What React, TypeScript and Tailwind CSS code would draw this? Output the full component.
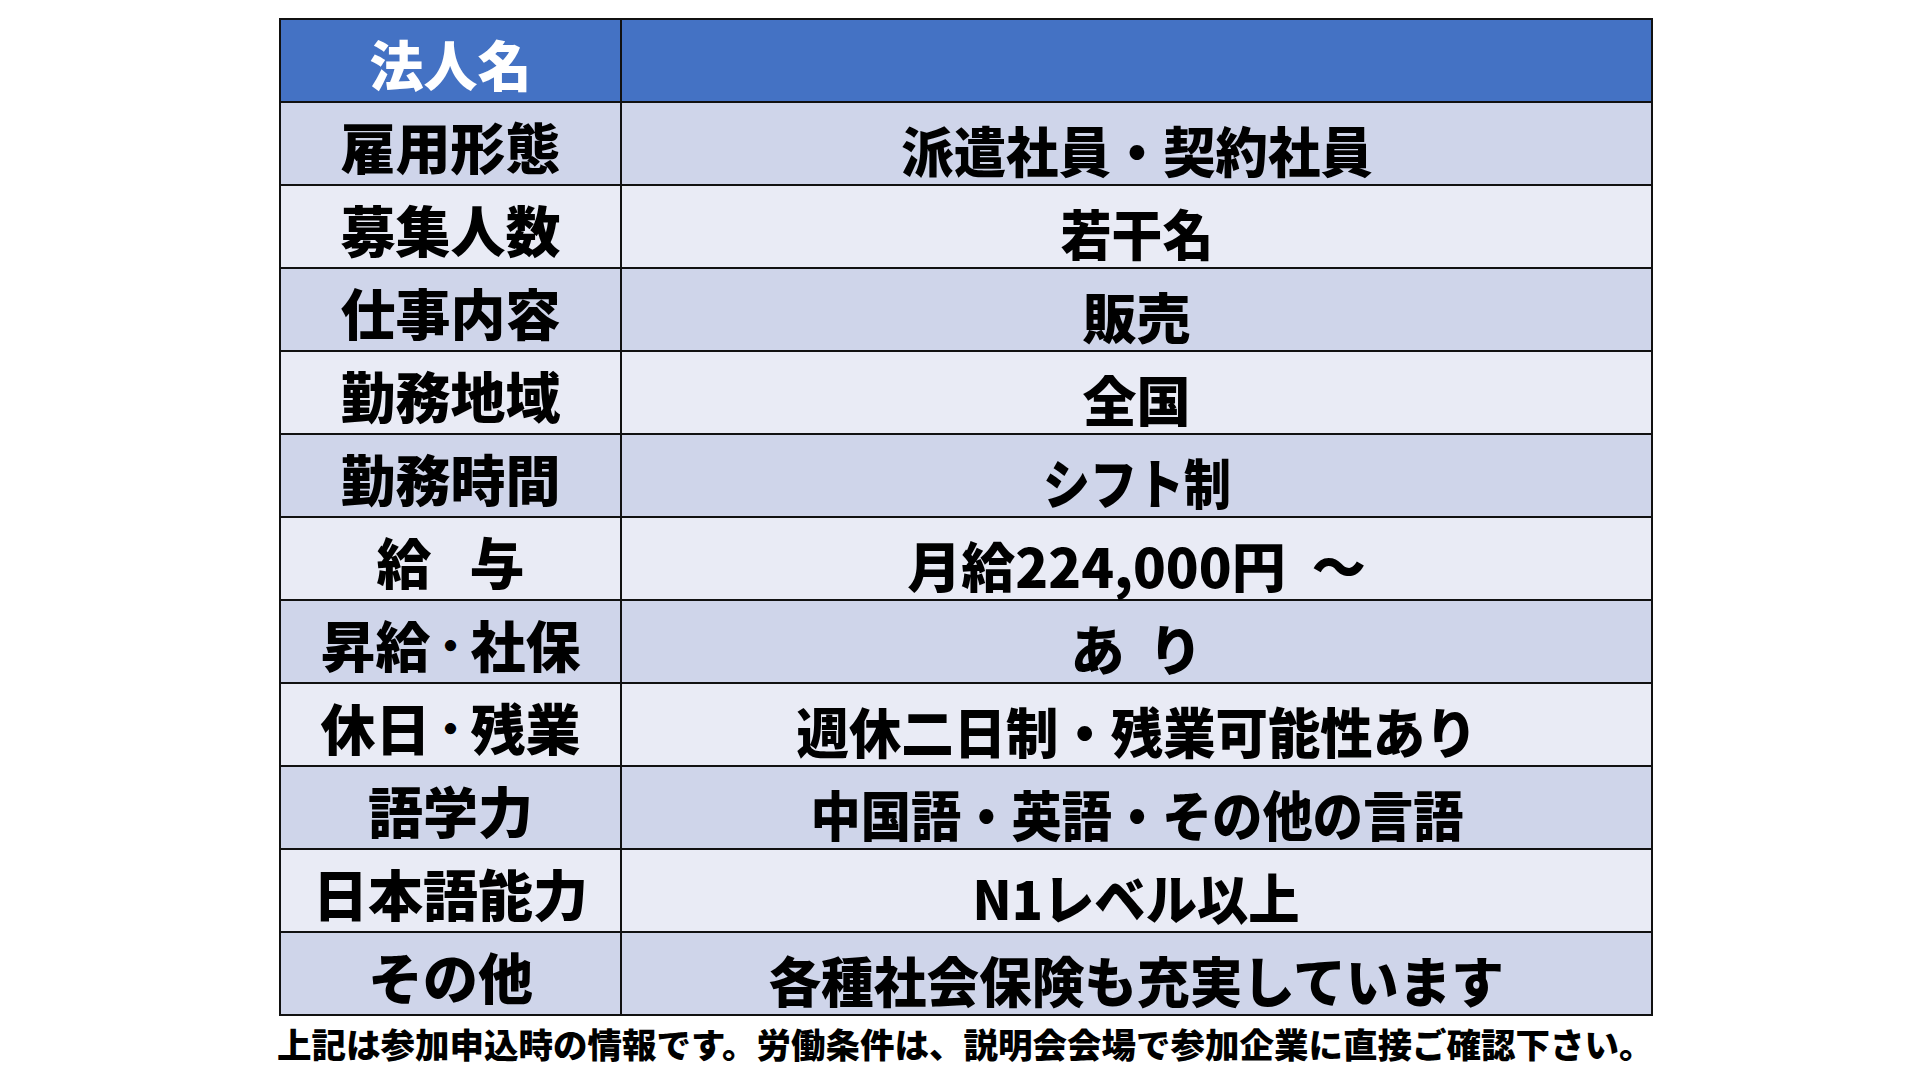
import type { ReactNode } from 'react'

// narrower middle dot, like the proportional one in the slide
const Dot = () => <span className="inline-block text-[40px] -translate-y-[6px]">・</span>

const rows: { label: ReactNode; value: ReactNode; sx: string }[] = [
  { label: '雇用形態', value: '派遣社員・契約社員', sx: 'scale-x-[0.97]' },
  { label: '募集人数', value: '若干名', sx: 'scale-x-[0.94]' },
  { label: '仕事内容', value: '販売', sx: 'scale-x-[1]' },
  { label: '勤務地域', value: '全国', sx: 'scale-x-[1]' },
  { label: '勤務時間', value: 'シフト制', sx: 'scale-x-[0.87]' },
  {
    label: (
      <>
        給<span className="inline-block w-[38px]" />与
      </>
    ),
    value: (
      <>
        月給224,000円<span className="inline-block w-[26px]" />～
      </>
    ),
    sx: 'scale-x-[1]',
  },
  {
    label: (
      <>
        昇給<Dot />社保
      </>
    ),
    value: (
      <>
        あ<span className="inline-block w-[24px]" />り
      </>
    ),
    sx: 'scale-x-[1]',
  },
  {
    label: (
      <>
        休日<Dot />残業
      </>
    ),
    value: '週休二日制・残業可能性あり',
    sx: 'scale-x-[0.97]',
  },
  { label: '語学力', value: '中国語・英語・その他の言語', sx: 'scale-x-[0.93]' },
  { label: '日本語能力', value: 'N1レベル以上', sx: 'scale-x-[0.95]' },
  { label: 'その他', value: '各種社会保険も充実しています', sx: 'scale-x-[0.975]' },
]

export default function App() {
  return (
    <div
      className="w-[1920px] h-[1080px] bg-white overflow-hidden"
      style={{ fontFamily: '"Noto Sans CJK JP", "Noto Sans", sans-serif' }}
    >
      <div className="ml-[279px] mt-[18px] w-[1374px] border-2 border-[#111]">
        {/* header */}
        <div className="flex h-[81px] bg-[#4472c4]">
          <div className="w-[341px] border-r-2 border-[#111] flex items-center justify-center">
            <span className="text-white text-[54px] font-black leading-none pt-[6px]">法人名</span>
          </div>
          <div className="flex-1" />
        </div>

        {rows.map((r, i) => (
          <div
            key={i}
            className={
              'flex h-[83px] border-t-2 border-[#111] ' + (i % 2 === 0 ? 'bg-[#cfd5ea]' : 'bg-[#e9ebf5]')
            }
          >
            <div className="w-[341px] border-r-2 border-[#111] flex items-center justify-center">
              <span className="text-black text-[55px] font-black leading-none pt-[4px] whitespace-pre">{r.label}</span>
            </div>
            <div className="flex-1 flex items-center justify-center">
              <span className={'inline-block text-black text-[54px] font-black leading-none pt-[12px] whitespace-pre ' + r.sx}>
                {r.value}
              </span>
            </div>
          </div>
        ))}
      </div>

      <p className="ml-[277px] mt-[10px] text-[34.5px] font-black leading-none text-black whitespace-nowrap">
        上記は参加申込時の情報です。労働条件は、説明会会場で参加企業に直接ご確認下さい。
      </p>
    </div>
  )
}
